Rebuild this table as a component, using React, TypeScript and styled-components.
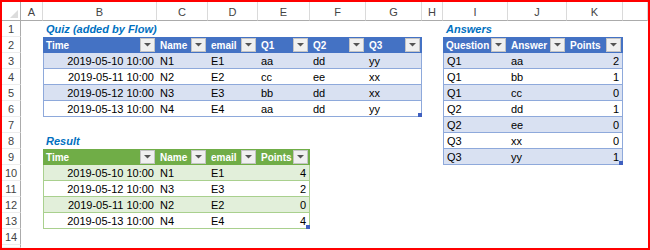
import React from 'react';
import styled, { createGlobalStyle } from 'styled-components';

const GlobalStyle = createGlobalStyle`
  html, body { margin: 0; padding: 0; background: #fff; }
  body { font-family: 'Liberation Sans', Arial, sans-serif; }
`;

const Frame = styled.div`
  width: 650px;
  height: 250px;
  box-sizing: border-box;
  border: 2px solid #ff0000;
  overflow: hidden;
  background: #fff;
`;

const Sheet = styled.div`
  display: grid;
  grid-template-columns: 19px 22px 114px 51px 50px 52px 56px 56px 21px 65px 59px 56px 1fr;
  grid-template-rows: 19px repeat(14, 16px) 1fr;
  height: 100%;
  font-size: 11px;
  color: #000;
`;

const Corner = styled.div`
  grid-row: 1;
  grid-column: 1;
  position: relative;
  border-right: 1px solid #ababab;
  border-bottom: 1px solid #ababab;
  &::after {
    content: '';
    position: absolute;
    right: 2px;
    bottom: 2px;
    width: 0;
    height: 0;
    border-left: 8px solid transparent;
    border-bottom: 8px solid #dcdcdc;
  }
`;

const ColHead = styled.div<{ $col: number }>`
  grid-row: 1;
  grid-column: ${(p) => p.$col};
  box-sizing: border-box;
  border-bottom: 1px solid #ababab;
  border-right: 1px solid #dadada;
  display: flex;
  align-items: center;
  justify-content: center;
  padding-top: 2px;
  color: #444;
`;

const RowHead = styled.div<{ $row: number }>`
  grid-column: 1;
  grid-row: ${(p) => p.$row};
  box-sizing: border-box;
  border-right: 1px solid #ababab;
  border-bottom: 1px solid #ececec;
  display: flex;
  align-items: center;
  justify-content: center;
  color: #444;
`;

const Title = styled.div<{ $col: string; $row: number }>`
  grid-column: ${(p) => p.$col};
  grid-row: ${(p) => p.$row};
  padding-left: 3px;
  line-height: 16px;
  white-space: nowrap;
  font-weight: bold;
  font-style: italic;
  color: #0070c0;
`;

const TableBox = styled.div<{ $col: string; $row: string; $line: string }>`
  grid-column: ${(p) => p.$col};
  grid-row: ${(p) => p.$row};
  position: relative;
  border-left: 1px solid ${(p) => p.$line};
  border-right: 1px solid ${(p) => p.$line};
  display: flex;
  flex-direction: column;
`;

const HeadRow = styled.div<{ $cols: string; $bg: string }>`
  display: grid;
  grid-template-columns: ${(p) => p.$cols};
  height: 16px;
  margin: 0 -1px;
  background: ${(p) => p.$bg};
`;

const HeadCell = styled.div`
  display: flex;
  align-items: center;
  min-width: 0;
  padding-left: 3px;
  color: #fff;
  font-size: 10px;
  font-weight: bold;
  white-space: nowrap;
  overflow: hidden;
`;

const FilterBtn = styled.span`
  margin-left: auto;
  margin-right: 2px;
  flex: none;
  width: 15px;
  height: 14px;
  box-sizing: border-box;
  border: 1px solid #c4c4c4;
  background: #f0f0f0;
  display: flex;
  align-items: center;
  justify-content: center;
`;

const BodyRow = styled.div<{ $cols: string; $bg: string; $line: string }>`
  display: grid;
  grid-template-columns: ${(p) => p.$cols};
  height: 16px;
  box-sizing: border-box;
  background: ${(p) => p.$bg};
  border-bottom: 1px solid ${(p) => p.$line};
`;

const Cell = styled.div<{ $align: 'left' | 'right' }>`
  padding: 1px 3px 0;
  line-height: 14px;
  text-align: ${(p) => p.$align};
  white-space: nowrap;
  overflow: hidden;
`;

const Handle = styled.span`
  position: absolute;
  right: -1px;
  bottom: 0;
  width: 4px;
  height: 4px;
  background: #3f5fbf;
`;

type Palette = { head: string; band: string; line: string };
const blue: Palette = { head: '#4472c4', band: '#d9e1f2', line: '#8ea9db' };
const green: Palette = { head: '#70ad47', band: '#e2efda', line: '#a9d08e' };

type Column = { name: string; width: number; align: 'left' | 'right' };

function ExcelTable({
  col,
  row,
  palette,
  columns,
  rows,
}: {
  col: string;
  row: string;
  palette: Palette;
  columns: Column[];
  rows: string[][];
}) {
  const last = columns.length - 1;
  const headCols = columns.map((c) => `${c.width}px`).join(' ');
  const bodyCols = columns
    .map((c, i) => `${i === 0 || i === last ? c.width - 1 : c.width}px`)
    .join(' ');

  return (
    <TableBox $col={col} $row={row} $line={palette.line}>
      <HeadRow $cols={headCols} $bg={palette.head}>
        {columns.map((c) => (
          <HeadCell key={c.name}>
            {c.name}
            <FilterBtn>
              <svg width="7" height="4" viewBox="0 0 7 4">
                <polygon points="0,0 7,0 3.5,3.5" fill="#555" />
              </svg>
            </FilterBtn>
          </HeadCell>
        ))}
      </HeadRow>
      {rows.map((r, i) => (
        <BodyRow
          key={i}
          $cols={bodyCols}
          $bg={i % 2 === 0 ? palette.band : '#fff'}
          $line={palette.line}
        >
          {r.map((v, j) => (
            <Cell key={j} $align={columns[j].align}>
              {v}
            </Cell>
          ))}
        </BodyRow>
      ))}
      <Handle />
    </TableBox>
  );
}

const letters = ['A', 'B', 'C', 'D', 'E', 'F', 'G', 'H', 'I', 'J', 'K', ''];

const quizCols: Column[] = [
  { name: 'Time', width: 114, align: 'right' },
  { name: 'Name', width: 51, align: 'left' },
  { name: 'email', width: 50, align: 'left' },
  { name: 'Q1', width: 52, align: 'left' },
  { name: 'Q2', width: 56, align: 'left' },
  { name: 'Q3', width: 56, align: 'left' },
];

const quizRows = [
  ['2019-05-10 10:00', 'N1', 'E1', 'aa', 'dd', 'yy'],
  ['2019-05-11 10:00', 'N2', 'E2', 'cc', 'ee', 'xx'],
  ['2019-05-12 10:00', 'N3', 'E3', 'bb', 'dd', 'xx'],
  ['2019-05-13 10:00', 'N4', 'E4', 'aa', 'dd', 'yy'],
];

const answerCols: Column[] = [
  { name: 'Question', width: 65, align: 'left' },
  { name: 'Answer', width: 59, align: 'left' },
  { name: 'Points', width: 56, align: 'right' },
];

const answerRows = [
  ['Q1', 'aa', '2'],
  ['Q1', 'bb', '1'],
  ['Q1', 'cc', '0'],
  ['Q2', 'dd', '1'],
  ['Q2', 'ee', '0'],
  ['Q3', 'xx', '0'],
  ['Q3', 'yy', '1'],
];

const resultCols: Column[] = [
  { name: 'Time', width: 114, align: 'right' },
  { name: 'Name', width: 51, align: 'left' },
  { name: 'email', width: 50, align: 'left' },
  { name: 'Points', width: 52, align: 'right' },
];

const resultRows = [
  ['2019-05-10 10:00', 'N1', 'E1', '4'],
  ['2019-05-12 10:00', 'N3', 'E3', '2'],
  ['2019-05-11 10:00', 'N2', 'E2', '0'],
  ['2019-05-13 10:00', 'N4', 'E4', '4'],
];

export default function App() {
  return (
    <>
      <GlobalStyle />
      <Frame>
        <Sheet>
          <Corner />
          {letters.map((l, i) => (
            <ColHead key={i} $col={i + 2}>
              {l}
            </ColHead>
          ))}
          {Array.from({ length: 15 }, (_, i) => (
            <RowHead key={i} $row={i + 2}>
              {i < 14 ? i + 1 : ''}
            </RowHead>
          ))}

          <Title $col="3 / 9" $row={2}>
            Quiz (added by Flow)
          </Title>
          <ExcelTable col="3 / 9" row="3 / 8" palette={blue} columns={quizCols} rows={quizRows} />

          <Title $col="10 / 13" $row={2}>
            Answers
          </Title>
          <ExcelTable col="10 / 13" row="3 / 11" palette={blue} columns={answerCols} rows={answerRows} />

          <Title $col="3 / 7" $row={9}>
            Result
          </Title>
          <ExcelTable col="3 / 7" row="10 / 15" palette={green} columns={resultCols} rows={resultRows} />
        </Sheet>
      </Frame>
    </>
  );
}
